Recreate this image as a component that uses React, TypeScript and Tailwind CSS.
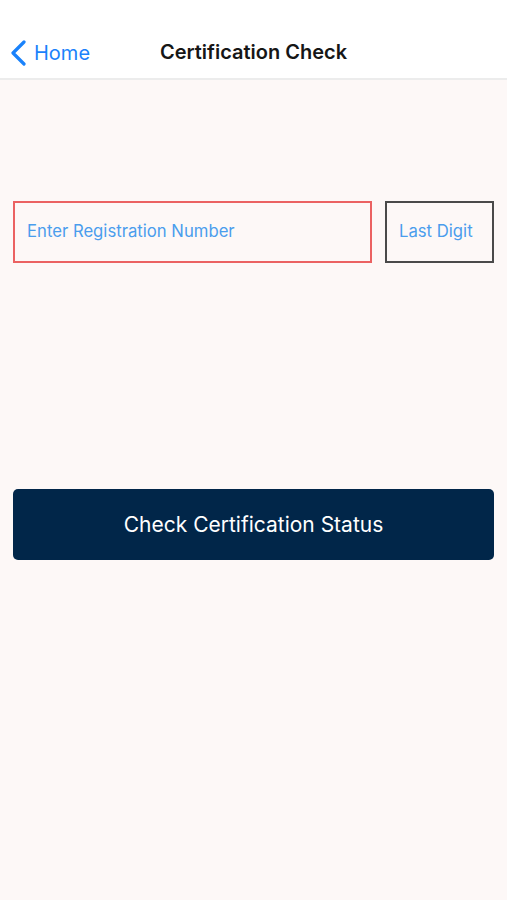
export default function App() {
  return (
    <div className="min-h-[900px] w-full flex flex-col bg-[#fdf8f7] font-['Inter','Liberation_Sans',sans-serif]">
      <header className="relative h-[80px] bg-white border-b-2 border-[#ececec] flex items-center px-[10px] pt-[28px]">
        <button className="flex items-center gap-[7px] text-[#1a82fb]">
          <svg width="17" height="26" viewBox="0 0 17 26" fill="none">
            <path d="M14 2 L3 13 L14 24" stroke="#1a82fb" strokeWidth="3.2" strokeLinecap="round" strokeLinejoin="round" />
          </svg>
          <span className="text-[20px] leading-none">Home</span>
        </button>
        <h1 className="absolute left-0 right-0 bottom-[11px] text-center text-[20px] font-semibold text-[#161616] pointer-events-none">
          Certification Check
        </h1>
      </header>

      <main className="flex flex-col px-[13px] pt-[121px]">
        <div className="flex gap-[13px]">
          <div className="flex-1 h-[62px] border-2 border-[#eb6262] flex items-center px-[12px]">
            <span className="text-[16.7px] text-[#4a9ded]">Enter Registration Number</span>
          </div>
          <div className="w-[109px] h-[62px] border-2 border-[#4a4a4a] flex items-center px-[12px]">
            <span className="text-[16.7px] text-[#4a9ded]">Last Digit</span>
          </div>
        </div>

        <button className="mt-[226px] h-[71px] rounded-[5px] bg-[#012649] text-white text-[21px] flex items-center justify-center">
          Check Certification Status
        </button>
      </main>
    </div>
  );
}
